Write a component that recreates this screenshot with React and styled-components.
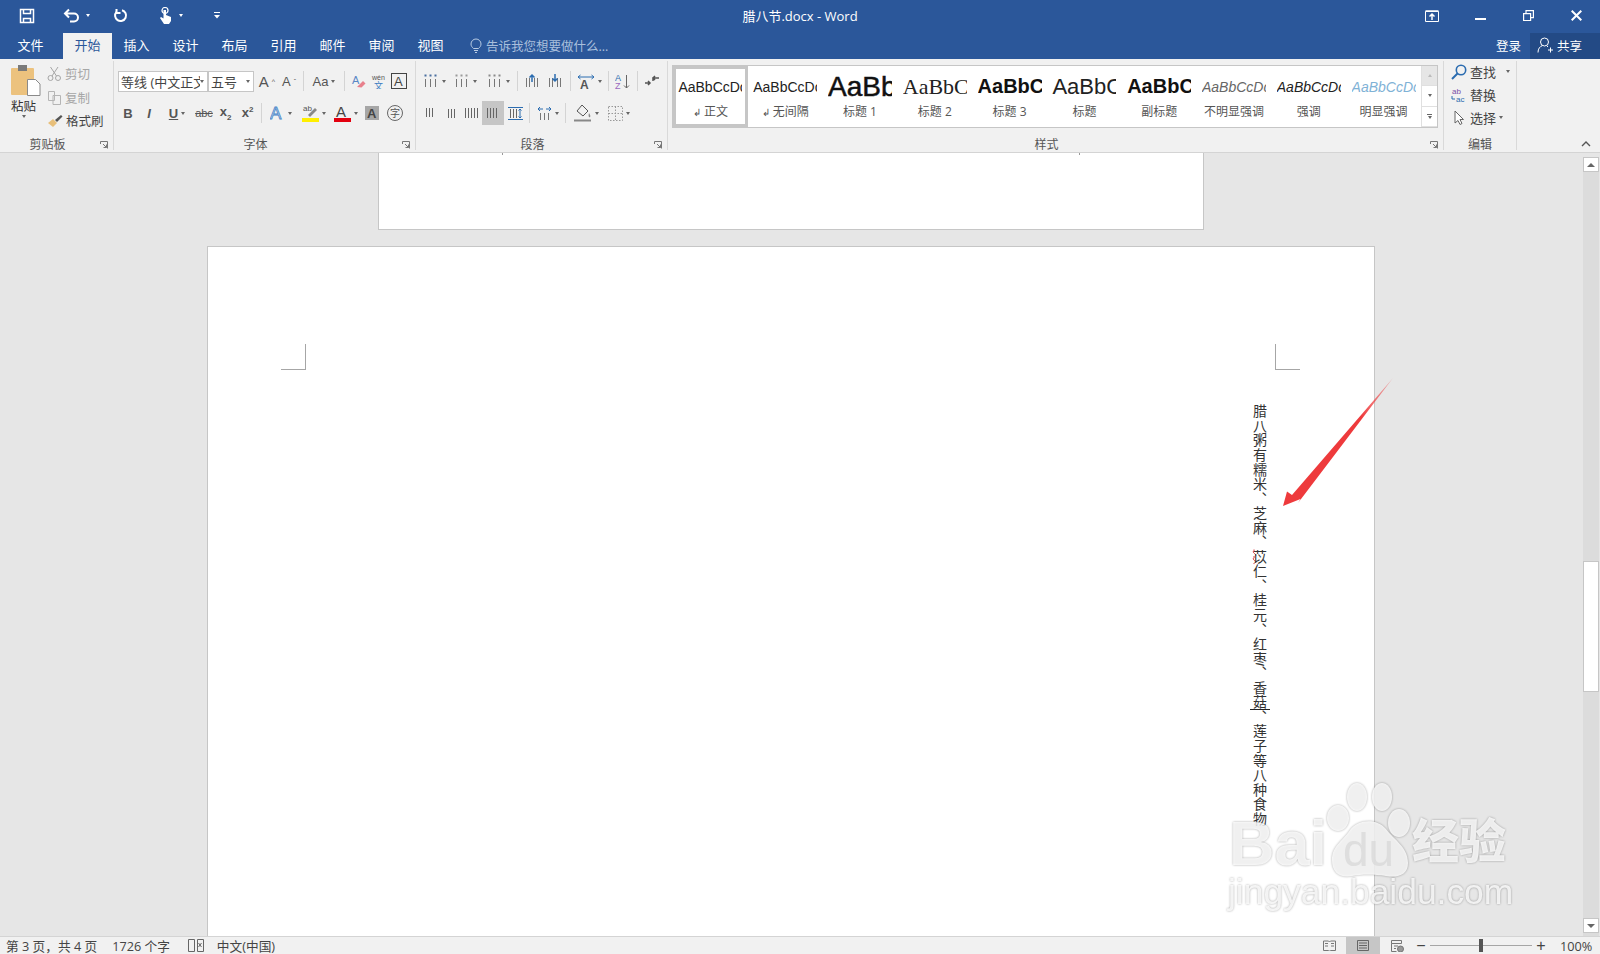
import styled, { createGlobalStyle } from 'styled-components';

const GlobalStyle = createGlobalStyle`
  html, body { margin: 0; padding: 0; background: #e6e6e6; }
  body { font-family: "Open Sans", "Noto Sans CJK SC", sans-serif; color: #444; }
`;

const Shell = styled.div`
  position: relative;
  width: 1600px;
  height: 954px;
  overflow: hidden;
  display: flex;
  flex-direction: column;
`;

/* title bar */
const TitleBar = styled.div`
  height: 33px;
  box-sizing: border-box;
  padding-bottom: 2px;
  background: #2b579a;
  color: #fff;
  display: grid;
  grid-template-columns: 1fr auto 1fr;
  align-items: center;
`;
const Qat = styled.div`
  display: flex;
  align-items: center;
  padding-left: 19px;
`;
const QatBtn = styled.div`
  width: ${(p) => p.$w}px;
  display: flex;
  align-items: center;
  gap: 6px;
`;
const WinTitle = styled.div`
  font-size: 13px;
  color: #fff;
`;
const WinControls = styled.div`
  display: flex;
  justify-content: flex-end;
`;
const WinBtn = styled.div`
  width: 48px;
  display: flex;
  justify-content: center;
`;

/* tabs */
const TabBar = styled.div`
  height: 26px;
  background: #2b579a;
  display: flex;
  align-items: stretch;
  padding-left: 6px;
`;
const Tab = styled.div`
  width: 49px;
  box-sizing: border-box;
  padding-bottom: 3px;
  margin-left: ${(p) => p.$gap || 0}px;
  display: flex;
  align-items: center;
  justify-content: center;
  font-size: 13px;
  background: ${(p) => (p.$active ? '#f1f1f1' : 'transparent')};
  color: ${(p) => (p.$active ? '#2b579a' : '#fff')};
`;
const TellMe = styled.div`
  margin-left: 15px;
  padding-bottom: 2px;
  display: flex;
  align-items: center;
  gap: 4px;
  font-size: 12.5px;
  color: #a9bfdc;
`;
const Account = styled.div`
  margin-left: auto;
  display: flex;
  align-items: stretch;
`;
const SignIn = styled.div`
  display: flex;
  align-items: center;
  padding-bottom: 2px;
  font-size: 12.5px;
  color: #fff;
  margin-right: 9px;
`;
const Share = styled.div`
  width: 70px;
  background: #234a85;
  color: #fff;
  font-size: 12.5px;
  padding-bottom: 2px;
  display: flex;
  align-items: center;
  gap: 3px;
  padding-left: 7px;
  box-sizing: border-box;
`;

/* ribbon */
const Ribbon = styled.div`
  height: 94px;
  box-sizing: border-box;
  background: #f1f1f1;
  border-bottom: 1px solid #d4d4d4;
  display: flex;
  position: relative;
`;
const Group = styled.div`
  width: ${(p) => p.$w}px;
  box-sizing: border-box;
  display: flex;
  flex-direction: column;
  margin: 2px 0 2px;
  border-right: 1px solid #d9d9d9;
`;
const GroupBody = styled.div`
  height: 74px;
  flex: none;
  display: flex;
  padding: ${(p) => p.$pad || '0'};
  box-sizing: border-box;
`;
const GroupLabel = styled.div`
  position: relative;
  flex: 1;
  box-sizing: border-box;
  padding-right: ${(p) => (p.$launcher ? 18 : 0)}px;
  display: flex;
  align-items: center;
  justify-content: center;
  font-size: 12px;
  color: #555;
`;
const Launcher = styled.svg`
  position: absolute;
  right: 5px;
  top: 6px;
  width: 8px;
  height: 8px;
`;
const Collapse = styled.svg`
  position: absolute;
  right: 9px;
  bottom: 5px;
  width: 10px;
  height: 7px;
`;

const PasteCol = styled.div`
  width: 47px;
  display: flex;
  flex-direction: column;
  align-items: center;
  padding-top: 4px;
  font-size: 12.5px;
  color: #333;
`;
const PasteIcon = styled.svg`
  margin-left: 5px;
  flex: none;
`;
const PasteLabel = styled.div`
  margin-top: 1px;
  line-height: 17px;
`;
const SmallCol = styled.div`
  display: flex;
  flex-direction: column;
  gap: 3.5px;
  padding-top: 2.5px;
`;
const SmallBtn = styled.div`
  display: flex;
  align-items: center;
  gap: 3px;
  font-size: 12.5px;
  height: 20px;
  color: ${(p) => (p.$off ? '#a6a6a6' : '#444')};
`;

const Rows = styled.div`
  display: flex;
  flex-direction: column;
  gap: 8px;
  padding-top: 8px;
`;
const Row = styled.div`
  display: flex;
  align-items: center;
  height: 24px;
`;
const Select = styled.div`
  width: ${(p) => p.$w}px;
  height: 21px;
  box-sizing: border-box;
  background: #fff;
  border: 1px solid #c6c6c6;
  margin-right: ${(p) => p.$mr || 0}px;
  display: flex;
  align-items: center;
  font-size: 13px;
  color: #444;
  padding: 0 3px 0 2px;
  white-space: nowrap;
  overflow: hidden;
`;
const SelectText = styled.span`
  flex: 1;
  overflow: hidden;
`;
const Tool = styled.div`
  width: ${(p) => p.$w}px;
  height: 24px;
  flex: none;
  display: flex;
  align-items: center;
  justify-content: center;
  gap: 3px;
  background: ${(p) => (p.$active ? '#c6c6c6' : 'transparent')};
  font-family: "Liberation Sans", sans-serif;
  color: #555;
`;
const Caret = styled.span`
  width: 0;
  height: 0;
  flex: none;
  border-left: ${(p) => (p.$big ? 4 : 2.5)}px solid transparent;
  border-right: ${(p) => (p.$big ? 4 : 2.5)}px solid transparent;
  border-top: ${(p) => (p.$big ? 4 : 3)}px solid ${(p) => p.$c || '#666'};
`;
const CaretUp = styled(Caret)`
  border-top: 0;
  border-bottom: ${(p) => (p.$big ? 4 : 3)}px solid ${(p) => p.$c || '#666'};
`;
const Sep = styled.span`
  width: 1px;
  height: 20px;
  margin: 0 3px;
  flex: none;
  background: #d4d4d4;
`;
const Glyph = styled.span`
  font-size: ${(p) => p.$s || 14}px;
  font-weight: ${(p) => p.$b || 400};
  font-style: ${(p) => (p.$i ? 'italic' : 'normal')};
  text-decoration: ${(p) => p.$d || 'none'};
  color: ${(p) => p.$c || '#555'};
  line-height: 1;
`;
const Sub = styled.sub`
  font-size: 8px;
`;
const Sup = styled.sup`
  font-size: 8px;
`;

/* style gallery */
const Gallery = styled.div`
  margin: 4px 0 0 4px;
  width: 766px;
  height: 63px;
  box-sizing: border-box;
  display: flex;
  background: #fff;
  border: 1px solid #c6c6c6;
`;
const StyleCard = styled.div`
  width: 74.8px;
  flex: none;
  box-sizing: border-box;
  overflow: hidden;
  border: 3px solid ${(p) => (p.$active ? '#c6c6c6' : 'transparent')};
  display: flex;
  flex-direction: column;
  align-items: center;
`;
const Sample = styled.div`
  width: 64px;
  height: 35px;
  overflow: hidden;
  white-space: nowrap;
  display: flex;
  align-items: center;
  font-family: ${(p) => (p.$serif ? '"Liberation Serif"' : '"Liberation Sans"')}, sans-serif;
  font-size: ${(p) => p.$s}px;
  font-weight: ${(p) => p.$b || 400};
  font-style: ${(p) => (p.$i ? 'italic' : 'normal')};
  color: ${(p) => p.$c || '#222'};
  -webkit-text-stroke: ${(p) => p.$stroke || 0}px ${(p) => p.$c || '#222'};
`;
const StyleName = styled.div`
  font-size: 12px;
  color: #555;
  line-height: 16px;
  display: flex;
  align-items: center;
  gap: 3px;
`;
const GalleryScroll = styled.div`
  margin-left: auto;
  width: 15px;
  flex: none;
  display: flex;
  flex-direction: column;
  border-left: 1px solid #e0e0e0;
`;
const GalleryBtn = styled.div`
  flex: 1;
  display: flex;
  flex-direction: column;
  align-items: center;
  justify-content: center;
  gap: 1px;
  background: ${(p) => (p.$off ? '#e6e6e6' : '#fff')};
  border-bottom: 1px solid #e0e0e0;
`;
const Dash = styled.span`
  width: 5px;
  height: 1px;
  background: #666;
`;

const EditCol = styled.div`
  display: flex;
  flex-direction: column;
  gap: 2px;
  padding: 0 0 0 7px;
`;
const EditBtn = styled.div`
  height: 21px;
  display: flex;
  align-items: center;
  gap: 3px;
  font-size: 13px;
  color: #444;
`;

/* document */
const Workspace = styled.div`
  flex: 1;
  min-height: 0;
  display: flex;
  background: #e6e6e6;
`;
const DocArea = styled.div`
  flex: 1;
  min-width: 0;
  box-sizing: border-box;
  padding-right: 1px;
  overflow: hidden;
  display: flex;
  flex-direction: column;
  align-items: center;
  gap: 16px;
`;
const PrevPage = styled.div`
  width: 826px;
  height: 77px;
  flex: none;
  box-sizing: border-box;
  background: #fff;
  border: 1px solid #c6c6c6;
  border-top: 0;
  display: flex;
  justify-content: space-between;
  padding: 0 123px;
`;
const FootTick = styled.span`
  width: 1px;
  height: 2px;
  background: #999;
`;
const Page = styled.div`
  width: 1168px;
  flex: 1;
  box-sizing: border-box;
  background: #fff;
  border: 1px solid #c6c6c6;
  border-bottom: 0;
  padding: 97px 74px 0 73px;
  display: flex;
  flex-direction: column;
`;
const MarkRow = styled.div`
  display: flex;
  justify-content: space-between;
`;
const Mark = styled.div`
  width: 24px;
  height: 25px;
  border-bottom: 1px solid #a6a6a6;
  ${(p) => (p.$side === 'left' ? 'border-right' : 'border-left')}: 1px solid #a6a6a6;
`;
const VerticalText = styled.div`
  align-self: flex-end;
  margin: 34px 30px 0 0;
  height: 450px;
  writing-mode: vertical-rl;
  font-family: "Noto Sans CJK SC", sans-serif;
  font-size: 14px;
  line-height: 20px;
  letter-spacing: 0.55px;
  color: #333;
`;
const Misspelt = styled.span`
  text-decoration: underline wavy #d9363e 1px;
  text-underline-position: left;
  text-underline-offset: -5px;
`;
const Cursor = styled.span`
  position: relative;
  &::after {
    content: "";
    position: absolute;
    left: 0;
    right: 0;
    bottom: 0;
    height: 1px;
    background: #222;
  }
`;

const ScrollCol = styled.div`
  width: 16px;
  margin-right: 1px;
  padding-top: 4px;
  padding-bottom: 3px;
  box-sizing: border-box;
  display: flex;
  flex-direction: column;
  background: linear-gradient(#e6e6e6 4px, #dcdcdc 4px);
`;
const ScrollBtn = styled.div`
  height: 15px;
  flex: none;
  box-sizing: border-box;
  background: #fff;
  border: 1px solid #c6c6c6;
  display: flex;
  align-items: center;
  justify-content: center;
  margin-top: ${(p) => (p.$end ? 'auto' : '0')};
`;
const Thumb = styled.div`
  height: 131px;
  flex: none;
  margin-top: 389px;
  box-sizing: border-box;
  background: #fff;
  border: 1px solid #c6c6c6;
`;

/* status bar */
const StatusBar = styled.div`
  height: 18px;
  flex: none;
  background: #f1f1f1;
  border-top: 1px solid #d4d4d4;
  box-sizing: border-box;
  display: flex;
  align-items: center;
  font-size: 12.7px;
  color: #444;
  padding-left: 6px;
`;
const StatusText = styled.span`
  margin-left: ${(p) => p.$ml || 0}px;
  margin-right: ${(p) => p.$mr || 0}px;
  white-space: nowrap;
`;
const StatusRight = styled.div`
  margin-left: auto;
  display: flex;
  align-items: center;
  height: 100%;
`;
const ViewBtn = styled.div`
  width: 34px;
  height: 100%;
  display: flex;
  align-items: center;
  justify-content: center;
  background: ${(p) => (p.$active ? '#c6c6c6' : 'transparent')};
`;
const ZoomSign = styled.span`
  width: 14px;
  text-align: center;
  font-family: "Liberation Sans", sans-serif;
  font-size: 16px;
  line-height: 1;
  color: #444;
`;
const Slider = styled.div`
  position: relative;
  width: 102px;
  height: 1px;
  margin: 0 2px;
  background: #a6a6a6;
`;
const SliderThumb = styled.span`
  position: absolute;
  left: 49px;
  top: -6px;
  width: 4px;
  height: 13px;
  background: #555;
`;
const ZoomPct = styled.span`
  width: 32px;
  margin: 0 8px 0 12px;
  white-space: nowrap;
`;

/* things pasted over the shot */
const Arrow = styled.svg`
  position: absolute;
  left: 1280px;
  top: 376px;
  width: 116px;
  height: 134px;
  pointer-events: none;
`;
const Watermark = styled.div`
  position: absolute;
  left: 1226px;
  top: 780px;
  width: 292px;
  height: 140px;
  color: rgba(255, 255, 255, 0.82);
  filter: drop-shadow(0 0 1px rgba(0, 0, 0, 0.4));
  pointer-events: none;
`;
const Paw = styled.svg`
  position: absolute;
  left: 98px;
  top: 0;
  width: 90px;
  height: 98px;
`;
const WmBai = styled.span`
  position: absolute;
  left: 3px;
  top: 33px;
  font: bold 63px/60px "Liberation Sans", sans-serif;
`;
const WmDu = styled.span`
  position: absolute;
  left: 117px;
  top: 47px;
  font: 46px/1 "Liberation Sans", sans-serif;
  color: rgba(210, 210, 210, 0.6);
`;
const WmCn = styled.span`
  position: absolute;
  left: 186px;
  top: 32px;
  font: 900 47px/1.1 "Noto Sans CJK SC", sans-serif;
  white-space: nowrap;
`;
const WmUrl = styled.span`
  position: absolute;
  left: 2px;
  top: 95px;
  font: 35.4px/1 "Liberation Sans", sans-serif;
  white-space: nowrap;
`;

const Ico = ({ w = 16, h = 16, vb, children, ...rest }) => (
  <svg width={w} height={h} viewBox={vb || `0 0 ${w} ${h}`} fill="none" {...rest}>
    {children}
  </svg>
);

const LauncherIcon = () => (
  <Launcher viewBox="0 0 8 8" fill="none" stroke="#777">
    <path d="M.5 3V.5H7.500M7.500.5V7.500M3 3l3.500 3.500M3.500 6.500h3v-3" />
  </Launcher>
);

/* paragraph glyphs: the ribbon is showing its vertical-text variants */
const Bars = ({ xs, top = 3, bottom = 13 }) => (
  <Ico w={16} h={16} stroke="#666">
    {xs.map((x, i) => (
      <path key={i} d={`M${x} ${top}V${bottom}`} />
    ))}
  </Ico>
);
const ListIcon = ({ mark = '#4a6f9f' }) => (
  <Ico w={16} h={16}>
    <path d="M2.500 6v8M7.500 6v8M12.500 6v8" stroke="#777" />
    <path d="M1.500 2.500h2M6.500 2.500h2M11.500 2.500h2" stroke={mark} strokeWidth="2" />
  </Ico>
);
const IndentIcon = ({ down }) => (
  <Ico w={16} h={16}>
    <path d="M2.500 5v9M5.500 5v9M10.500 5v9M13.500 5v9" stroke="#777" />
    <path d={down ? 'M8 1v7M5.500 5.500 8 8l2.500-2.500' : 'M8 9V2M5.500 4.500 8 2l2.500 2.500'} stroke="#2b6cb0" strokeWidth="1.500" />
  </Ico>
);

const fontRow1 = (
  <>
    <Tool $w={22}><Glyph $s={15}>A</Glyph><Glyph $s={7}>^</Glyph></Tool>
    <Tool $w={22}><Glyph $s={13}>A</Glyph><Glyph $s={7}>ˇ</Glyph></Tool>
    <Sep />
    <Tool $w={34}><Glyph $s={13}>Aa</Glyph><Caret /></Tool>
    <Sep />
    <Tool $w={20}>
      <Ico w={15} h={15}>
        <text x="1" y="10" fontSize="11" fill="#5a87c5" fontFamily="Liberation Sans">A</text>
        <path d="M6 13l6-6 2.500 2.500-4 4z" fill="#e8808c" />
      </Ico>
    </Tool>
    <Tool $w={20}>
      <Ico w={15} h={15}>
        <text x="1" y="6" fontSize="7" fill="#555" fontFamily="Liberation Sans">wén</text>
        <text x="3" y="15" fontSize="9" fill="#3a7cc2" fontFamily="Noto Sans CJK SC">文</text>
      </Ico>
    </Tool>
    <Tool $w={22}>
      <Ico w={16} h={16}>
        <rect x=".5" y=".5" width="15" height="15" stroke="#444" />
        <text x="3" y="13" fontSize="13" fill="#444" fontFamily="Liberation Sans">A</text>
      </Ico>
    </Tool>
  </>
);

const fontRow2 = (
  <>
    <Tool $w={20}><Glyph $b={700} $s={13}>B</Glyph></Tool>
    <Tool $w={22}><Glyph $b={700} $i $s={13}>I</Glyph></Tool>
    <Tool $w={34}><Glyph $b={700} $s={13} $d="underline">U</Glyph><Caret /></Tool>
    <Tool $w={20}><Glyph $s={11} $d="line-through">abc</Glyph></Tool>
    <Tool $w={23}><Glyph $b={700} $s={13}>x<Sub>2</Sub></Glyph></Tool>
    <Tool $w={21}><Glyph $b={700} $s={13}>x<Sup>2</Sup></Glyph></Tool>
    <Sep />
    <Tool $w={32}>
      <Ico w={15} h={16}>
        <text x="0" y="14" fontSize="17" fill="#d9e8f7" stroke="#4a86c8" strokeWidth=".8" fontFamily="Liberation Sans">A</text>
      </Ico>
      <Caret />
    </Tool>
    <Tool $w={33}>
      <Ico w={17} h={18}>
        <text x="1" y="7" fontSize="8" fill="#555" fontFamily="Liberation Sans">ab</text>
        <path d="M6 11l7-7 2 2-7 7z" fill="#888" />
        <rect x="0" y="14" width="17" height="4" fill="#ffef00" />
      </Ico>
      <Caret />
    </Tool>
    <Tool $w={31}>
      <Ico w={17} h={18}>
        <text x="2" y="13" fontSize="15" fill="#444" fontFamily="Liberation Sans">A</text>
        <rect x="0" y="14" width="17" height="4" fill="#e3000f" />
      </Ico>
      <Caret />
    </Tool>
    <Tool $w={22}>
      <Ico w={14} h={14}>
        <rect width="14" height="14" fill="#a6a6a6" />
        <text x="2" y="12" fontSize="13" fill="#444" fontWeight="700" fontFamily="Liberation Sans">A</text>
      </Ico>
    </Tool>
    <Tool $w={23}>
      <Ico w={16} h={16}>
        <circle cx="8" cy="8" r="7.500" stroke="#666" />
        <text x="3" y="12" fontSize="10" fill="#555" fontFamily="Noto Sans CJK SC">字</text>
      </Ico>
    </Tool>
  </>
);

const paraRow1 = (
  <>
    <Tool $w={30}><ListIcon /><Caret /></Tool>
    <Tool $w={33}><ListIcon mark="#9a9a9a" /><Caret /></Tool>
    <Tool $w={32}><ListIcon mark="#8a8a8a" /><Caret /></Tool>
    <Sep />
    <Tool $w={22}><IndentIcon /></Tool>
    <Tool $w={24}><IndentIcon down /></Tool>
    <Sep />
    <Tool $w={31}>
      <Ico w={18} h={15}>
        <path d="M1 3h16M1 3l2.500-2M1 3l2.500 2M17 3l-2.500-2M17 3l-2.500 2" stroke="#2b6cb0" />
        <text x="3" y="15" fontSize="12" fontWeight="700" fill="#555" fontFamily="Liberation Sans">A</text>
      </Ico>
      <Caret />
    </Tool>
    <Sep />
    <Tool $w={22}>
      <Ico w={16} h={17}>
        <text x="0" y="8" fontSize="9" fill="#2b6cb0" fontFamily="Liberation Sans">A</text>
        <text x="0" y="16" fontSize="9" fill="#9a6abf" fontFamily="Liberation Sans">Z</text>
        <path d="M11.500 2v13M9 12.500l2.500 2.500 2.500-2.500" stroke="#666" />
      </Ico>
    </Tool>
    <Sep />
    <Tool $w={22}>
      <Ico w={16} h={12}>
        <path d="M1 8h5M4 6l2 2-2 2" stroke="#555" strokeWidth="1.500" />
        <path d="M15 3H9v3M11 1 9 3l2 2" stroke="#555" strokeWidth="1.500" />
      </Ico>
    </Tool>
  </>
);

const paraRow2 = (
  <>
    <Tool $w={21}><Bars xs={[4.500, 7.500, 10.500]} bottom={12} /></Tool>
    <Tool $w={21}><Bars xs={[5.500, 8.500, 11.500]} top={4} bottom={13} /></Tool>
    <Tool $w={21}><Bars xs={[1.500, 4.500, 7.500, 10.500, 13.500]} /></Tool>
    <Tool $w={22} $active><Bars xs={[2.500, 5.500, 8.500, 11.500]} /></Tool>
    <Tool $w={22}>
      <Ico w={17} h={15}>
        <path d="M1 1.500h15M1 13.500h15" stroke="#2b6cb0" />
        <path d="M3.500 3v9M6.500 3v9M9.500 3v9" stroke="#666" />
        <path d="M13 3v9M11.500 4.500 13 3l1.500 1.500M11.500 10.500 13 12l1.500-1.500" stroke="#2b6cb0" />
      </Ico>
    </Tool>
    <Sep />
    <Tool $w={29}>
      <Ico w={15} h={15}>
        <path d="M1 3h5M1 3l2-2M1 3l2 2M14 3H9M14 3l-2-2M14 3l-2 2" stroke="#2b6cb0" />
        <path d="M3.500 7v7M7.500 7v7M11.500 7v7" stroke="#777" />
      </Ico>
      <Caret />
    </Tool>
    <Sep />
    <Tool $w={33}>
      <Ico w={19} h={18}>
        <path d="M9 1l6 6-5 5-6-5z" stroke="#555" />
        <path d="M16 9c1 2 2 3 1 4s-2-1-1-4z" fill="#888" />
        <path d="M1 16.500h17" stroke="#888" strokeWidth="2" />
      </Ico>
      <Caret />
    </Tool>
    <Tool $w={34}>
      <Ico w={15} h={15}>
        <path d="M.5.500h14v14H.5zM7.500.500v14M.5 7.500h14" stroke="#999" strokeDasharray="1.500 1.500" />
      </Ico>
      <Caret />
    </Tool>
  </>
);

const styleCards = [
  { name: '正文', s: 14, text: 'AaBbCcDc', active: true, mark: true },
  { name: '无间隔', s: 14, text: 'AaBbCcDc', mark: true },
  { name: '标题 1', s: 28, text: 'AaBb', stroke: 0.5, c: '#111' },
  { name: '标题 2', s: 22, text: 'AaBbC', serif: true },
  { name: '标题 3', s: 20, text: 'AaBbC', b: 700, c: '#111' },
  { name: '标题', s: 22, text: 'AaBbC' },
  { name: '副标题', s: 20, text: 'AaBbC', b: 700, c: '#111' },
  { name: '不明显强调', s: 14, text: 'AaBbCcDc', i: true, c: '#666' },
  { name: '强调', s: 14, text: 'AaBbCcDc', i: true },
  { name: '明显强调', s: 14, text: 'AaBbCcDc', i: true, c: '#7fb2d6' },
];

const tabs = ['插入', '设计', '布局', '引用', '邮件', '审阅', '视图'];

export default function App() {
  return (
    <Shell>
      <GlobalStyle />
      <TitleBar>
        <Qat>
          <QatBtn $w={44}>
            <Ico w={16} h={16} stroke="#fff" strokeWidth="1.500">
              <path d="M1.500 1.500h13v13h-13z" />
              <path d="M4.500 1.500v4h7v-4M4.500 14.500v-4h7v4" />
            </Ico>
          </QatBtn>
          <QatBtn $w={50}>
            <Ico w={17} h={15} stroke="#fff" strokeWidth="2">
              <path d="M6 1.500 2 5.500l4 4M2 5.500h9a4 4 0 0 1 0 8H7" />
            </Ico>
            <Caret $c="#fff" />
          </QatBtn>
          <QatBtn $w={45}>
            <Ico w={15} h={15} stroke="#fff" strokeWidth="2">
              <path d="M9 2.200a5.500 5.500 0 1 1-5.500 1.600" />
              <path d="M3.500 1v4h4" />
            </Ico>
          </QatBtn>
          <QatBtn $w={56}>
            <Ico w={15} h={17} fill="#fff">
              <circle cx="7" cy="3.500" r="3" stroke="#fff" strokeWidth="1.200" fill="none" />
              <path d="M5.500 3h2.500v5l5 2v4l-2 3H6L2 11l1-1 2.500 1.500z" fill="#fff" />
            </Ico>
            <Caret $c="#fff" />
          </QatBtn>
          <QatBtn $w={12}>
            <Ico w={6} h={7}>
              <path d="M0 .5h6" stroke="#fff" />
              <path d="M0 3h6L3 6.500z" fill="#fff" />
            </Ico>
          </QatBtn>
        </Qat>
        <WinTitle>腊八节.docx - Word</WinTitle>
        <WinControls>
          <WinBtn>
            <Ico w={14} h={12} stroke="#fff">
              <path d="M.5 1.500h13v10H.5z" />
              <path d="M7 10V4M4.500 6.500 7 4l2.500 2.500M.5 1h13" strokeWidth="1.500" />
            </Ico>
          </WinBtn>
          <WinBtn>
            <Ico w={11} h={11}><path d="M0 9h11" stroke="#fff" strokeWidth="2" /></Ico>
          </WinBtn>
          <WinBtn>
            <Ico w={11} h={11} stroke="#fff" strokeWidth="1.200">
              <path d="M.6 3.600h7v7h-7zM3 3.500V.6h7.400v7H7.500" />
            </Ico>
          </WinBtn>
          <WinBtn>
            <Ico w={11} h={11} stroke="#fff" strokeWidth="2"><path d="M.7.700l9.600 9.600M10.300.700.7 10.300" /></Ico>
          </WinBtn>
        </WinControls>
      </TitleBar>

      <TabBar>
        <Tab>文件</Tab>
        <Tab $active $gap={8}>开始</Tab>
        {tabs.map((t) => (
          <Tab key={t}>{t}</Tab>
        ))}
        <TellMe>
          <Ico w={12} h={15} stroke="#b9cce4">
            <path d="M3.500 10.500C2 9 1 8 1 6a5 5 0 0 1 10 0c0 2-1 3-2.500 4.500zM4 12.500h4M5 14.500h2" />
          </Ico>
          告诉我您想要做什么...
        </TellMe>
        <Account>
          <SignIn>登录</SignIn>
          <Share>
            <Ico w={17} h={16} stroke="#fff">
              <circle cx="7.500" cy="5" r="4" />
              <path d="M1 15.500c0-4 2-6 4.500-7M10 9l1 1M13.500 10.500v5M11 13h5" />
            </Ico>
            共享
          </Share>
        </Account>
      </TabBar>

      <Ribbon>
        <Group $w={114}>
          <GroupBody>
            <PasteCol>
              <PasteIcon width="30" height="32" viewBox="0 0 30 32" fill="none">
                <rect x="0" y="3" width="23" height="27" rx="1" fill="#ecc27e" />
                <rect x="7" y="0" width="9" height="6" fill="#7a7a7a" />
                <path d="M16.500 14.500h8l4.500 4.500v11.500H16.500z" fill="#fff" stroke="#8a8a8a" />
              </PasteIcon>
              <PasteLabel>粘贴</PasteLabel>
              <Caret />
            </PasteCol>
            <SmallCol>
              <SmallBtn $off>
                <Ico w={15} h={15} stroke="#a6a6a6">
                  <circle cx="3.500" cy="12" r="2.500" /><circle cx="11" cy="12" r="2.500" />
                  <path d="M5 10 11 1M9.500 10 3.500 1" />
                </Ico>
                剪切
              </SmallBtn>
              <SmallBtn $off>
                <Ico w={15} h={15} stroke="#b5b5b5">
                  <path d="M1.500 1.500h6v9h-6zM6 5.500h7.500v9H6z" fill="#f1f1f1" />
                </Ico>
                复制
              </SmallBtn>
              <SmallBtn>
                <Ico w={16} h={14}>
                  <path d="M1 9l5-4 4 4-4 4z" fill="#e8bf7a" />
                  <path d="M8 6l6-5 1.500 1.500L10 8z" fill="#555" />
                </Ico>
                格式刷
              </SmallBtn>
            </SmallCol>
          </GroupBody>
          <GroupLabel $launcher>剪贴板<LauncherIcon /></GroupLabel>
        </Group>

        <Group $w={302}>
          <GroupBody $pad="0 0 0 4px">
            <Rows>
              <Row>
                <Select $w={90}><SelectText>等线 (中文正文</SelectText><Caret /></Select>
                <Select $w={46} $mr={2}><SelectText>五号</SelectText><Caret /></Select>
                {fontRow1}
              </Row>
              <Row>{fontRow2}</Row>
            </Rows>
          </GroupBody>
          <GroupLabel $launcher>字体<LauncherIcon /></GroupLabel>
        </Group>

        <Group $w={252}>
          <GroupBody $pad="0 0 0 3px">
            <Rows>
              <Row>{paraRow1}</Row>
              <Row>{paraRow2}</Row>
            </Rows>
          </GroupBody>
          <GroupLabel $launcher>段落<LauncherIcon /></GroupLabel>
        </Group>

        <Group $w={776}>
          <GroupBody>
            <Gallery>
              {styleCards.map((c) => (
                <StyleCard key={c.name} $active={c.active}>
                  <Sample $s={c.s} $b={c.b} $i={c.i} $c={c.c} $serif={c.serif} $stroke={c.stroke}>{c.text}</Sample>
                  <StyleName>{c.mark && <Glyph $s={10}>↲</Glyph>}{c.name}</StyleName>
                </StyleCard>
              ))}
              <GalleryScroll>
                <GalleryBtn $off><CaretUp $c="#bbb" /></GalleryBtn>
                <GalleryBtn><Caret /></GalleryBtn>
                <GalleryBtn><Dash /><Caret /></GalleryBtn>
              </GalleryScroll>
            </Gallery>
          </GroupBody>
          <GroupLabel $launcher>样式<LauncherIcon /></GroupLabel>
        </Group>

        <Group $w={73}>
          <GroupBody>
            <EditCol>
              <EditBtn>
                <Ico w={16} h={16}>
                  <circle cx="10" cy="6" r="4.700" stroke="#2b6cb0" strokeWidth="1.600" />
                  <path d="M6.500 9.500 1 15" stroke="#2b6cb0" strokeWidth="2" />
                </Ico>
                查找&nbsp;&nbsp;<Caret />
              </EditBtn>
              <EditBtn>
                <Ico w={16} h={16}>
                  <text x="1" y="7" fontSize="8" fill="#7a4fa8" fontFamily="Liberation Sans">ab</text>
                  <text x="5" y="15" fontSize="8" fill="#2b6cb0" fontFamily="Liberation Sans">ac</text>
                  <path d="M1 9v3h3" stroke="#2b6cb0" />
                </Ico>
                替换
              </EditBtn>
              <EditBtn>
                <Ico w={16} h={16} stroke="#666">
                  <path d="M4 1v12l3-2.500 2 4 2-1-2-4h3.500z" fill="#fff" />
                </Ico>
                选择<Caret />
              </EditBtn>
            </EditCol>
          </GroupBody>
          <GroupLabel>编辑</GroupLabel>
        </Group>
        <Collapse viewBox="0 0 10 7" fill="none" stroke="#555" strokeWidth="1.400">
          <path d="M1 6l4-4 4 4" />
        </Collapse>
      </Ribbon>

      <Workspace>
        <DocArea>
          <PrevPage>
            <FootTick />
            <FootTick />
          </PrevPage>
          <Page>
            <MarkRow>
              <Mark $side="left" />
              <Mark $side="right" />
            </MarkRow>
            <VerticalText>
              腊八粥有糯米、芝麻、<Misspelt>苡</Misspelt>仁、桂元、红枣、香<Cursor>菇</Cursor>、莲子等八种食物
            </VerticalText>
          </Page>
        </DocArea>
        <ScrollCol>
          <ScrollBtn><CaretUp $big $c="#666" /></ScrollBtn>
          <Thumb />
          <ScrollBtn $end><Caret $big $c="#666" /></ScrollBtn>
        </ScrollCol>
      </Workspace>

      <StatusBar>
        <StatusText $mr={15}>第 3 页，共 4 页</StatusText>
        <StatusText $mr={18}>1726 个字</StatusText>
        <Ico w={16} h={13} stroke="#666">
          <path d="M.5.500h6v12h-6zM9.500.500h6v12h-6z" />
          <path d="M10.500 4l3 4M13.500 4l-3 4" />
        </Ico>
        <StatusText $ml={13}>中文(中国)</StatusText>
        <StatusRight>
          <ViewBtn>
            <Ico w={13} h={11} stroke="#777">
              <path d="M.5 1h5l1 1 1-1h5v9.500h-5l-1 .5-1-.5h-5zM2 3.500h3M2 6h3M8 3.500h3M8 6h3" />
            </Ico>
          </ViewBtn>
          <ViewBtn $active>
            <Ico w={12} h={11} stroke="#666">
              <path d="M.5.500h11v10H.5zM2 3h8M2 5.500h8M2 8h8" />
            </Ico>
          </ViewBtn>
          <ViewBtn>
            <Ico w={13} h={12} stroke="#777">
              <path d="M.5.500h10v3H.5zM.5 3.500v8h5M3 6h4M3 8.500h2" />
              <circle cx="9.500" cy="9" r="3" fill="#999" />
            </Ico>
          </ViewBtn>
          <ZoomSign>−</ZoomSign>
          <Slider><SliderThumb /></Slider>
          <ZoomSign>+</ZoomSign>
          <ZoomPct>100%</ZoomPct>
        </StatusRight>
      </StatusBar>

      <Arrow viewBox="0 0 116 134">
        <defs>
          <linearGradient id="arrowFade" x1="0" y1="1" x2="1" y2="0">
            <stop offset="0.7" stopColor="#ee3a3c" />
            <stop offset="1" stopColor="#ee3a3c" stopOpacity="0.3" />
          </linearGradient>
        </defs>
        <path d="M3 130 7 115.500 12 119 113 2 18 127 20.500 123z" fill="url(#arrowFade)" />
      </Arrow>
      <Watermark>
        <Paw viewBox="0 0 90 98" fill="currentColor">
          <ellipse cx="33" cy="17" rx="10" ry="14" />
          <ellipse cx="58" cy="17" rx="10" ry="14" />
          <ellipse cx="14" cy="38" rx="11" ry="13" />
          <ellipse cx="75" cy="43" rx="11" ry="14" />
          <path d="M8 80c0-14 10-18 18-30 8-11 27-12 36-1 8 11 22 18 22 34 0 12-10 15-22 13-12-2-24-2-34 0-12 2-20-3-20-16z" />
        </Paw>
        <WmBai>Bai</WmBai>
        <WmDu>du</WmDu>
        <WmCn>经验</WmCn>
        <WmUrl>jingyan.baidu.com</WmUrl>
      </Watermark>
    </Shell>
  );
}
